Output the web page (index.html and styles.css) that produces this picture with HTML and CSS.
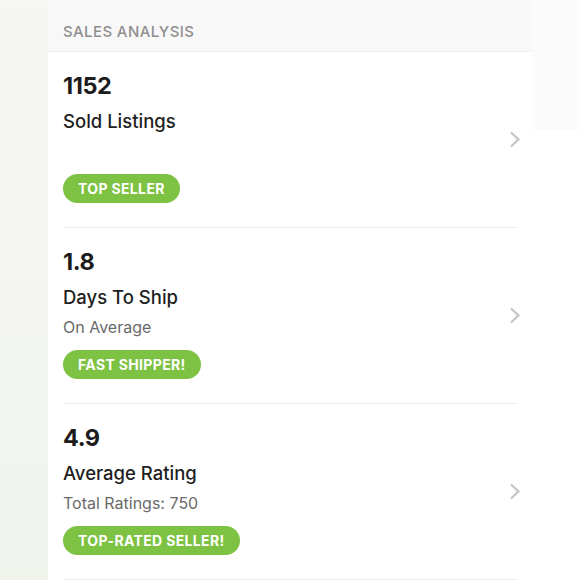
FILE: index.html
```html
<!DOCTYPE html>
<html>
<head>
<meta charset="utf-8">
<link rel="stylesheet" href="styles.css">
</head>
<body>
<div class="page">
  <div class="gutter"></div>
  <div class="panel">
    <div class="panel-header">SALES ANALYSIS</div>
    <div class="item">
      <div class="item-body">
        <div class="num">1152</div>
        <div class="title">Sold Listings</div>
        <div class="sub"></div>
        <span class="badge">TOP SELLER</span>
      </div>
      <svg class="chev" width="12" height="17" viewBox="0 0 12 17"><path d="M2 1.5 L9.5 8.5 L2 15.5" fill="none" stroke="#c4c4c4" stroke-width="2.2"/></svg>
    </div>
    <div class="item">
      <div class="item-body">
        <div class="num">1.8</div>
        <div class="title">Days To Ship</div>
        <div class="sub">On Average</div>
        <span class="badge">FAST SHIPPER!</span>
      </div>
      <svg class="chev" width="12" height="17" viewBox="0 0 12 17"><path d="M2 1.5 L9.5 8.5 L2 15.5" fill="none" stroke="#c4c4c4" stroke-width="2.2"/></svg>
    </div>
    <div class="item">
      <div class="item-body">
        <div class="num">4.9</div>
        <div class="title">Average Rating</div>
        <div class="sub">Total Ratings: 750</div>
        <span class="badge">TOP-RATED SELLER!</span>
      </div>
      <svg class="chev" width="12" height="17" viewBox="0 0 12 17"><path d="M2 1.5 L9.5 8.5 L2 15.5" fill="none" stroke="#c4c4c4" stroke-width="2.2"/></svg>
    </div>
  </div>
  <div class="side">
    <div class="side-top"></div>
  </div>
</div>
</body>
</html>
```

FILE: styles.css
```css
html, body {
  margin: 0;
  padding: 0;
  background: #ffffff;
}
body {
  font-family: "Inter", "Lato", sans-serif;
  color: #222222;
}
.page {
  display: flex;
  width: 580px;
  height: 580px;
  overflow: hidden;
}
.gutter {
  width: 48px;
  flex: none;
  background: linear-gradient(180deg, #f6f6f5 0%, #f3f5f1 60%, #eff3ec 100%);
}
.panel {
  width: 484px;
  flex: none;
  background: #ffffff;
}
.panel-header {
  height: 52px;
  box-sizing: border-box;
  padding: 23px 0 0 15px;
  background: #f9f8f8;
  border-bottom: 1px solid #f1efef;
  color: #8e8e8e;
  font-size: 15px;
  line-height: 18px;
  letter-spacing: 0.4px;
  font-weight: 500;
}
.item {
  display: flex;
  align-items: center;
  margin-left: 15px;
  width: 455px;
  border-bottom: 1px solid #ececec;
  box-sizing: border-box;
  height: 176px;
}
.item-body {
  flex: 1;
  display: flex;
  flex-direction: column;
  align-items: flex-start;
  padding-top: 19px;
  padding-bottom: 24px;
}
.num {
  font-size: 23.5px;
  font-weight: 700;
  line-height: 30px;
  letter-spacing: -0.4px;
  color: #1c1c1c;
}
.title {
  margin-top: 8px;
  font-size: 18.5px;
  line-height: 24px;
  font-weight: 500;
  color: #1f1f1f;
}
.sub {
  margin-top: 7px;
  height: 22px;
  font-size: 16px;
  line-height: 22px;
  color: #6a6a6a;
}
.badge {
  margin-top: 12px;
  height: 29px;
  line-height: 29px;
  padding: 0 15px;
  border-radius: 15px;
  background: #7dc242;
  color: #ffffff;
  font-size: 14px;
  font-weight: 700;
  letter-spacing: 0.35px;
}
.chev {
  flex: none;
  margin-right: -3px;
}
.side {
  flex: 1;
}
.side-top {
  height: 130px;
  background: #fcfbfb;
}
```
